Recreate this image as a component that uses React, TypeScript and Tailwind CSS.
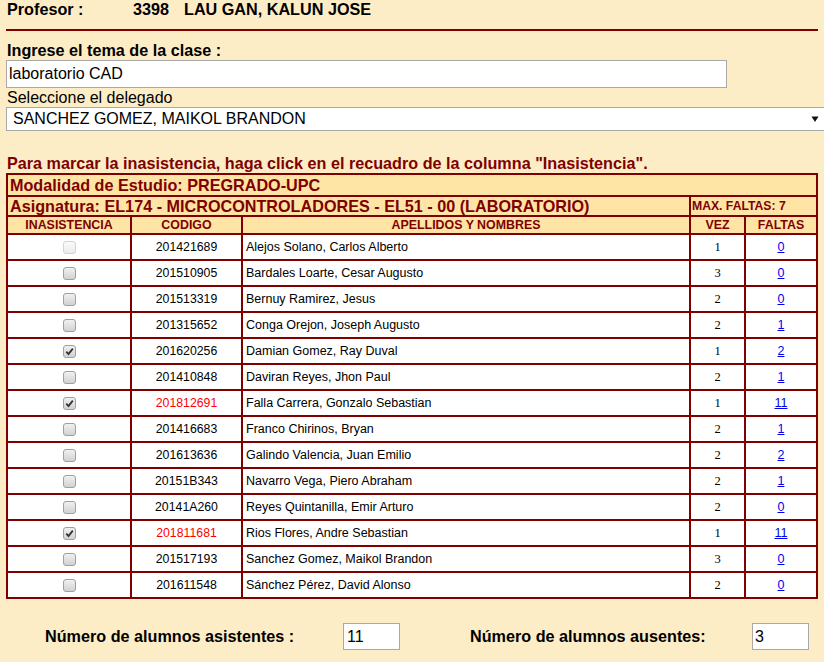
import React from "react";

type Alumno = {
  codigo: string;
  nombre: string;
  vez: number;
  faltas: number;
  marcado?: boolean;
  rojo?: boolean;
  bloqueado?: boolean;
};

const alumnos: Alumno[] = [
  { codigo: "201421689", nombre: "Alejos Solano, Carlos Alberto", vez: 1, faltas: 0, bloqueado: true },
  { codigo: "201510905", nombre: "Bardales Loarte, Cesar Augusto", vez: 3, faltas: 0 },
  { codigo: "201513319", nombre: "Bernuy Ramirez, Jesus", vez: 2, faltas: 0 },
  { codigo: "201315652", nombre: "Conga Orejon, Joseph Augusto", vez: 2, faltas: 1 },
  { codigo: "201620256", nombre: "Damian Gomez, Ray Duval", vez: 1, faltas: 2, marcado: true },
  { codigo: "201410848", nombre: "Daviran Reyes, Jhon Paul", vez: 2, faltas: 1 },
  { codigo: "201812691", nombre: "Falla Carrera, Gonzalo Sebastian", vez: 1, faltas: 11, marcado: true, rojo: true },
  { codigo: "201416683", nombre: "Franco Chirinos, Bryan", vez: 2, faltas: 1 },
  { codigo: "201613636", nombre: "Galindo Valencia, Juan Emilio", vez: 2, faltas: 2 },
  { codigo: "20151B343", nombre: "Navarro Vega, Piero Abraham", vez: 2, faltas: 1 },
  { codigo: "20141A260", nombre: "Reyes Quintanilla, Emir Arturo", vez: 2, faltas: 0 },
  { codigo: "201811681", nombre: "Rios Flores, Andre Sebastian", vez: 1, faltas: 11, marcado: true, rojo: true },
  { codigo: "201517193", nombre: "Sanchez Gomez, Maikol Brandon", vez: 3, faltas: 0 },
  { codigo: "201611548", nombre: "Sánchez Pérez, David Alonso", vez: 2, faltas: 0 },
];

function Casilla({ marcado, bloqueado }: { marcado?: boolean; bloqueado?: boolean }) {
  return (
    <span
      className={
        bloqueado
          ? "inline-flex items-center justify-center w-[13px] h-[13px] rounded-[3px] border border-[#d4d4d4] bg-gradient-to-b from-[#fafafa] to-[#ececec] align-middle"
          : "inline-flex items-center justify-center w-[13px] h-[13px] rounded-[3px] border border-[#a0a0a0] bg-gradient-to-b from-[#f0f0f0] to-[#d2d2d2] align-middle"
      }
    >
      {marcado && (
        <svg width="9" height="9" viewBox="0 0 9 9">
          <path d="M1.3 4.6 L3.5 7 L7.8 1.6" fill="none" stroke="#333" strokeWidth="1.8" />
        </svg>
      )}
    </span>
  );
}

export default function App() {
  return (
    <div className="min-h-[662px] w-[824px] overflow-hidden bg-[#fdedc7] font-['Liberation_Sans',Arial,sans-serif] text-black">
      <div className="pl-[6px]">
        <div className="flex h-[18px] items-center text-[16.2px] font-bold leading-[18px]">
          <span className="w-[127px] pl-[1px]">Profesor :</span>
          <span className="w-[51px]">3398</span>
          <span>LAU GAN, KALUN JOSE</span>
        </div>
        <div className="mt-[11px] h-[2px] w-[812px] bg-[#800000]" />

        <div className="mt-[9px] text-[16.2px] font-bold leading-[20px] pl-[1px]">Ingrese el tema de la clase :</div>
        <div className="flex h-[28px] w-[721px] items-center border border-[#a9a9a9] bg-white pl-[2px] text-[16px]">
          laboratorio CAD
        </div>
        <div className="mt-[1px] h-[18px] text-[16px] leading-[18px] pl-[1px]">Seleccione el delegado</div>
        <div className="flex h-[24px] w-[820px] items-center justify-between border border-r-0 border-[#a9a9a9] bg-white pl-[6px] pr-[6px] text-[16px]">
          <span>SANCHEZ GOMEZ, MAIKOL BRANDON</span>
          <svg width="8" height="8" viewBox="0 0 8 8" className="mr-[1px]">
            <path d="M0.5 1.5 H7.5 L4 7 Z" fill="#111" />
          </svg>
        </div>

        <div className="mt-[23px] h-[19px] text-[16.2px] font-bold leading-[19px] text-[#800000] pl-[1px] whitespace-nowrap">
          Para marcar la inasistencia, haga click en el recuadro de la columna "Inasistencia".
        </div>

        <table className="w-[812px] table-fixed border-collapse border-2 border-[#800000] text-[#800000]">
          <colgroup>
            <col className="w-[124px]" />
            <col className="w-[111px]" />
            <col className="w-[448px]" />
            <col className="w-[55px]" />
            <col />
          </colgroup>
          <tbody>
            <tr className="h-[22px] bg-[#fee5a6]">
              <td colSpan={5} className="border-2 border-[#800000] px-[2px] py-0 text-[16.2px] font-bold leading-[18px]">
                Modalidad de Estudio: PREGRADO-UPC
              </td>
            </tr>
            <tr className="h-[20px] bg-[#fee5a6]">
              <td colSpan={3} className="border-2 border-[#800000] px-[2px] py-0 text-[16.2px] font-bold leading-[18px] whitespace-nowrap">
                Asignatura: EL174 - MICROCONTROLADORES - EL51 - 00 (LABORATORIO)
              </td>
              <td colSpan={2} className="border-2 border-[#800000] px-[1px] py-0 text-[12.2px] font-bold leading-[14px]">
                MAX. FALTAS: 7
              </td>
            </tr>
            <tr className="h-[18px] bg-[#fee5a6] text-center text-[12.4px] font-bold leading-[14px]">
              <td className="border-2 border-[#800000] p-0">INASISTENCIA</td>
              <td className="border-2 border-[#800000] p-0">CODIGO</td>
              <td className="border-2 border-[#800000] p-0">APELLIDOS Y NOMBRES</td>
              <td className="border-2 border-[#800000] p-0">VEZ</td>
              <td className="border-2 border-[#800000] p-0">FALTAS</td>
            </tr>
            {alumnos.map((a) => (
              <tr key={a.codigo} className="h-[26px] bg-white text-black">
                <td className="border-2 border-[#800000] p-0 text-center leading-none">
                  <Casilla marcado={a.marcado} bloqueado={a.bloqueado} />
                </td>
                <td className={`border-2 border-[#800000] p-0 text-center text-[12.3px] ${a.rojo ? "text-[#ff0000]" : "text-black"}`}>
                  {a.codigo}
                </td>
                <td className="border-2 border-[#800000] py-0 pl-[3px] text-[12.5px]">{a.nombre}</td>
                <td className="border-2 border-[#800000] p-0 text-center font-['Liberation_Serif',serif] text-[12.5px]">
                  {a.vez}
                </td>
                <td className="border-2 border-[#800000] p-0 text-center text-[12.5px]">
                  <a href="#" className="text-[#0000ee] underline">
                    {a.faltas}
                  </a>
                </td>
              </tr>
            ))}
          </tbody>
        </table>
      </div>

      <div className="mt-[24px] flex items-center text-[16.2px] font-bold">
        <span className="ml-[45px] w-[298px]">Número de alumnos asistentes :</span>
        <div className="flex h-[27px] w-[57px] items-center border border-[#a9a9a9] bg-white pl-[3px] text-[16px] font-normal">11</div>
        <span className="ml-[70px] w-[282px]">Número de alumnos ausentes:</span>
        <div className="flex h-[27px] w-[57px] items-center border border-[#a9a9a9] bg-white pl-[2px] text-[16px] font-normal">3</div>
      </div>
    </div>
  );
}
